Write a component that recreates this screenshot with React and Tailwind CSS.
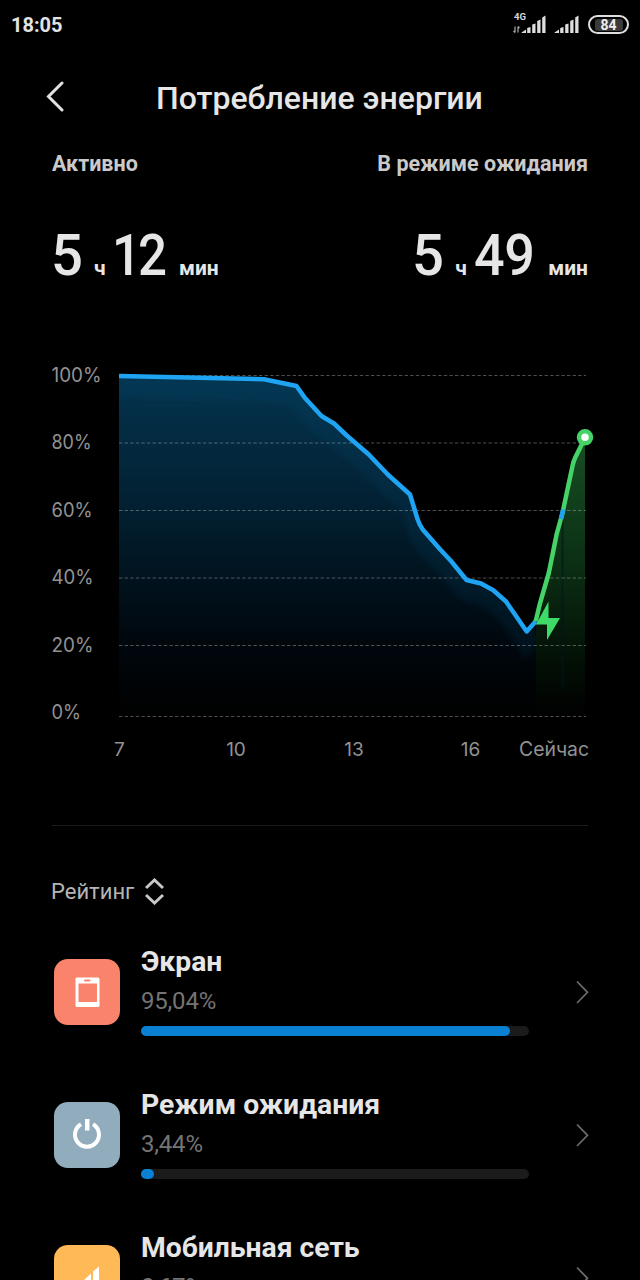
import React from 'react';

const GRID = [
  { label: '100%', y: 25.5, textY: 32, width: 50 },
  { label: '80%', y: 93, textY: 99, width: 40 },
  { label: '60%', y: 160.5, textY: 166.5, width: 41 },
  { label: '40%', y: 228, textY: 234, width: 42 },
  { label: '20%', y: 295.5, textY: 301.5, width: 42 },
  { label: '0%', y: 366.5, textY: 369, width: 29.5 },
];

const HOURS = [
  { label: '7', x: 119.5 },
  { label: '10', x: 236 },
  { label: '13', x: 354 },
  { label: '16', x: 470.5 },
];

const DISCHARGE =
  'M119 26 L264 29.3 L296.5 36 L305 48 L321.5 66 L334 73.5 L346.7 85.5 L368.5 104.3 L388.3 125 L410 144.5 L417.3 168.3 Q419 174 422.7 179.5 L440 199.3 L451 211 L466.5 230 L481 233.5 L493.3 240.3 L506 251.5 L526.7 281.5 L535.7 271.3';

const CHARGE =
  'M535.7 271.3 L540 253.3 L548.8 223 L556.7 184 L562.5 163 L572.5 116 Q573.5 111 575.5 107 L585 88';

const APPS = [
  { name: 'Экран', value: '95,04%', width: 369, icon: 'screen' },
  { name: 'Режим ожидания', value: '3,44%', width: 13, icon: 'power' },
  { name: 'Мобильная сеть', value: '0,67%', width: 10, icon: 'network' },
];

const Signal = () => (
  <svg width="26" height="18" viewBox="0 0 26 18" fill="#dedede">
    <path d="M0 18 L5 14.5 V18Z M6.2 13 L9.5 12 V18 H6.2Z M11.2 9.5 L14.5 8.5 V18 H11.2Z M16.2 6 L19.5 4.5 V18 H16.2Z M21.2 2.5 L24.5 0.5 V18 H21.2Z" />
  </svg>
);

const StatusBar = () => (
  <div className="flex h-[50px] shrink-0 items-center justify-between pl-[11px] pr-[11px]">
    <span className="text-[20px] font-bold leading-none text-[#e2e2e2]">18:05</span>
    <div className="flex h-[24px] items-end">
      <div className="mb-[4px] flex h-[21px] w-[8px] flex-col justify-between">
        <span className="ml-px text-[9.5px] font-bold leading-[9px] text-[#d8d8d8]">4G</span>
        <svg width="7" height="7" viewBox="0 0 7 7" fill="none" stroke="#aaa" strokeWidth="1.2">
          <path d="M2 0.5 V6.5 M0.5 5 L2 6.5 M5 6.5 V0.5 M6.5 2 L5 0.5" />
        </svg>
      </div>
      <div className="mb-[4px]"><Signal /></div>
      <div className="mb-[4px] ml-[7px]"><Signal /></div>
      <div className="mb-[3px] ml-[8px] flex h-[19px] w-[41px] items-center justify-center rounded-full border-2 border-[#dedede]">
        <span className="flex h-[12px] w-[28px] items-center justify-center rounded-[3px] bg-[#3a3a3a] text-[14px] font-bold leading-none text-[#eee]">84</span>
      </div>
    </div>
  </div>
);

const Duration = ({ label, hours, minutes, right }) => (
  <div className={right ? 'flex flex-col items-end' : 'flex flex-col items-start'}>
    <div className="text-[21.5px] font-bold leading-[28px] text-[#cacaca]">{label}</div>
    <div className="mt-[42px] flex items-baseline leading-[70px] text-[#e6e6e6]">
      <span className={right ? 'ml-[-2px] w-[43px] origin-left scale-x-[0.97] text-[58px] font-medium' : 'ml-[-1px] w-[43px] origin-left scale-x-[0.97] text-[58px] font-medium'}>{hours}</span>
      <span className="w-[13px] text-[21px] font-bold">ч</span>
      <span className={right ? 'ml-[6px] w-[74px] origin-left scale-x-[0.93] text-[58px] font-medium tracking-[-0.5px]' : 'ml-[5px] w-[67px] origin-left scale-x-[0.88] text-[58px] font-medium tracking-[-3.5px]'}>{minutes}</span>
      <span className="text-[21px] font-bold">мин</span>
    </div>
  </div>
);

const Chart = () => (
  <svg className="block shrink-0" width="640" height="430" viewBox="0 0 640 430">
    <defs>
      <linearGradient id="blueFill" gradientUnits="userSpaceOnUse" x1="0" y1="26" x2="0" y2="366">
        <stop offset="0" stopColor="#04344f" />
        <stop offset="0.4" stopColor="#021f30" />
        <stop offset="0.75" stopColor="#000910" />
        <stop offset="1" stopColor="#000000" />
      </linearGradient>
      <linearGradient id="greenFill" gradientUnits="userSpaceOnUse" x1="0" y1="88" x2="0" y2="366">
        <stop offset="0" stopColor="#174f24" />
        <stop offset="0.45" stopColor="#0b2f14" />
        <stop offset="0.8" stopColor="#031006" />
        <stop offset="1" stopColor="#000000" />
      </linearGradient>
      <clipPath id="blueArea">
        <path d={`${DISCHARGE} V366 H119 Z`} />
      </clipPath>
      <filter id="soft" x="-10%" y="-10%" width="120%" height="120%">
        <feGaussianBlur stdDeviation="3" />
      </filter>
    </defs>
    <path d={`${DISCHARGE} V366 H119 Z`} fill="url(#blueFill)" />
    <g clipPath="url(#blueArea)">
      <path d={DISCHARGE} transform="translate(0 11)" fill="none" stroke="#0b5275" strokeOpacity="0.16" strokeWidth="20" filter="url(#soft)" />
    </g>
    <path d={`${CHARGE} V366 H535.7 Z`} fill="url(#greenFill)" />
    <path d="M562.5 163 V340" stroke="#02161a" strokeOpacity="0.6" strokeWidth="2" />
    {GRID.map((row) => (
      <g key={row.label}>
        <line x1="119" x2="586" y1={row.y} y2={row.y} stroke="#fff" strokeOpacity="0.3" strokeDasharray="3.4 2.2" />
        <text x="51.5" y={row.textY} textLength={row.width} lengthAdjust="spacingAndGlyphs" fill="#929292" fontSize="20" fontFamily="Inter, sans-serif">{row.label}</text>
      </g>
    ))}
    <path d={DISCHARGE} fill="none" stroke="#1fa4f4" strokeWidth="4.5" strokeLinejoin="round" />
    <path d={CHARGE} fill="none" stroke="#45d367" strokeWidth="4.5" strokeLinejoin="round" />
    <path d="M561 169 L563.2 159.5" stroke="#1fa4f4" strokeWidth="4.5" />
    <path d="M548.5 251.5 L536 274.5 H547 V290 L560 268 H548.5 Z" fill="#3fdb68" />
    <circle cx="585" cy="87.3" r="6" fill="#fff" stroke="#45d367" strokeWidth="4.5" />
    {HOURS.map((hour) => (
      <text key={hour.label} x={hour.x} y="406" textAnchor="middle" fill="#929292" fontSize="19" fontFamily="Inter, sans-serif">{hour.label}</text>
    ))}
    <text x="519" y="406" textLength="70" lengthAdjust="spacingAndGlyphs" fill="#929292" fontSize="19.5" fontFamily="Inter, sans-serif">Сейчас</text>
  </svg>
);

const AppIcon = ({ type }) => {
  if (type === 'screen') {
    return (
      <svg width="66" height="66" viewBox="0 0 66 66">
        <rect width="66" height="66" rx="14" fill="#fa846b" />
        <path fillRule="evenodd" fill="#fff" d="M23 18.5 H44 Q45.5 18.5 45.5 20 V46.5 Q45.5 48 44 48 H23 Q21.5 48 21.5 46.5 V20 Q21.5 18.5 23 18.5 Z M24.5 24.5 V43 H43 V24.5 Z" />
        <rect x="30" y="20.5" width="6.5" height="2" rx="1" fill="#fa846b" />
      </svg>
    );
  }
  if (type === 'power') {
    return (
      <svg width="66" height="66" viewBox="0 0 66 66">
        <rect width="66" height="66" rx="14" fill="#91acbd" />
        <path d="M27 22.3 A12 12 0 1 0 39 22.3" fill="none" stroke="#fff" strokeWidth="4" />
        <path d="M33.2 17 V28.5" stroke="#fff" strokeWidth="4.5" />
      </svg>
    );
  }
  return (
    <svg width="66" height="66" viewBox="0 0 66 66">
      <rect width="66" height="66" rx="14" fill="#ffb957" />
      <path d="M20 45 L28 37 V45 Z M30 35 L37 28.5 V45 H30 Z M39 26.5 L45 21.5 V45 H39 Z" fill="#fff" />
    </svg>
  );
};

const AppRow = ({ app }) => (
  <div className="flex h-[143px] shrink-0 items-start pl-[54px]">
    <div className="mt-[14px] w-[66px]">
      <AppIcon type={app.icon} />
    </div>
    <div className="ml-[21px] w-[388px]">
      <div className="text-[28.3px] font-bold leading-[34px] text-[#e6e6e6]">{app.name}</div>
      <div className="mt-[7px] text-[24px] leading-[30px] tracking-[-0.2px] text-[#747474]">{app.value}</div>
      <div className="mt-[10px] h-[10px] rounded-full bg-[#1b1b1b]">
        <div className="h-full rounded-full bg-[#0a80d3]" style={{ width: app.width }} />
      </div>
    </div>
    <svg className="ml-[47px] mt-[35px]" width="14" height="24" viewBox="0 0 14 24" fill="none" stroke="#6c6c6c" strokeWidth="1.7">
      <path d="M1 1.5 L11.5 12.3 L1 23" />
    </svg>
  </div>
);

const App = () => {
  return (
    <div className="flex h-[1280px] w-[640px] flex-col overflow-hidden bg-black font-['Roboto',sans-serif]">
      <StatusBar />
      <header className="flex h-[100px] shrink-0 items-center pl-[46px]">
        <svg className="mb-[7px]" width="19" height="31" viewBox="0 0 19 31" fill="none" stroke="#e2e2e2" strokeWidth="3" strokeLinecap="round">
          <path d="M16 2 L2.5 15.5 L16 29" />
        </svg>
        <h1 className="mb-[4px] ml-[91px] whitespace-nowrap text-[32px] font-medium leading-[40px] text-[#e6e6e6]">Потребление энергии</h1>
      </header>
      <section className="flex h-[200px] shrink-0 items-start justify-between pl-[52px] pr-[52px]">
        <Duration label="Активно" hours="5" minutes="12" />
        <Duration label="В режиме ожидания" hours="5" minutes="49" right />
      </section>
      <Chart />
      <div className="mx-[52px] mt-[45px] h-px shrink-0 bg-[#1c1c1c]" />
      <div className="mt-[50px] flex h-[32px] shrink-0 items-center pl-[51px]">
        <span className="text-[22px] leading-[32px] text-[#b5b5b5]">Рейтинг</span>
        <svg className="mb-[2px] ml-[11px]" width="19" height="27" viewBox="0 0 19 27" fill="none" stroke="#c8c8c8" strokeWidth="3">
          <path d="M1 10 L9.5 2 L18 10 M1 17 L9.5 25 L18 17" />
        </svg>
      </div>
      <div className="mt-[37px] shrink-0">
        {APPS.map((app) => (
          <AppRow key={app.name} app={app} />
        ))}
      </div>
    </div>
  );
};

export default App;
